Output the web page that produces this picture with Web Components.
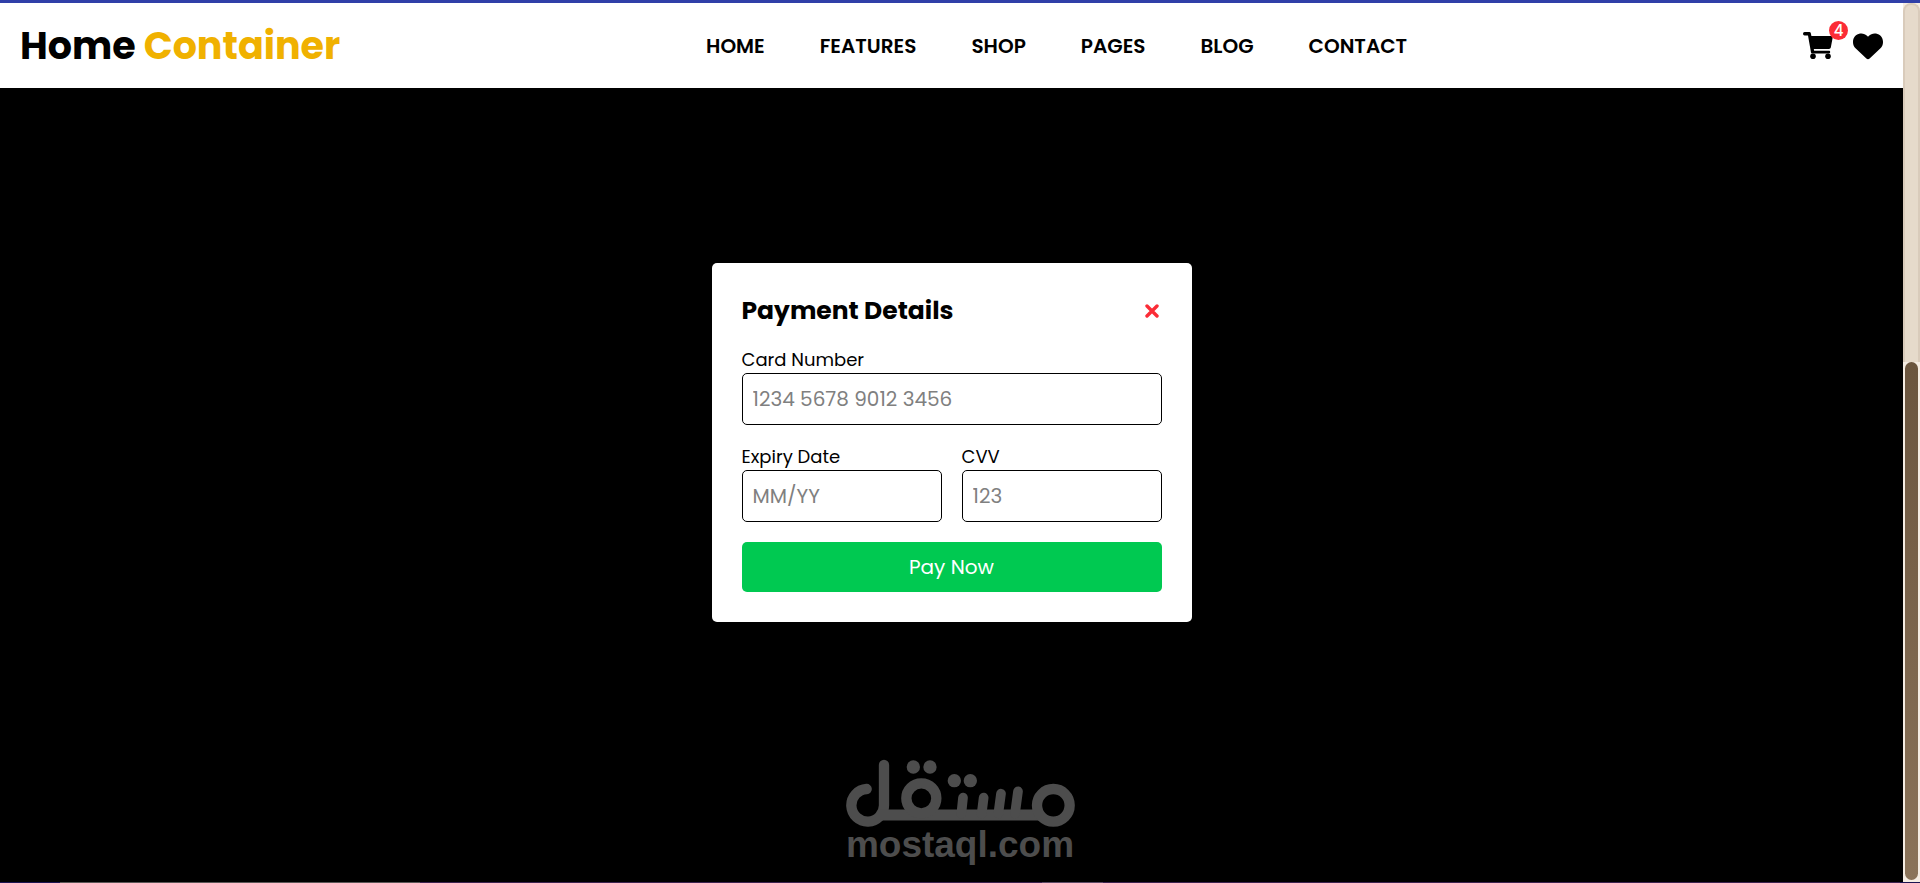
<!DOCTYPE html>
<html lang="en">
<head>
<meta charset="utf-8">
<title>Home Container</title>
<style>
  body { margin: 0; font-family: Poppins, Inter, "Open Sans", sans-serif; color: #000; background: #000; }
</style>
</head>
<body>
<app-page>
  <site-header slot="header">
    <nav-link href="#home">HOME</nav-link>
    <nav-link href="#features">FEATURES</nav-link>
    <nav-link href="#shop">SHOP</nav-link>
    <nav-link href="#pages">PAGES</nav-link>
    <nav-link href="#blog">BLOG</nav-link>
    <nav-link href="#contact">CONTACT</nav-link>
  </site-header>
  <payment-dialog heading="Payment Details">
    <form-field label="Card Number" placeholder="1234 5678 9012 3456"></form-field>
    <form-field label="Expiry Date" placeholder="MM/YY" half></form-field>
    <form-field label="CVV" placeholder="123" half></form-field>
  </payment-dialog>
  <scroll-rail slot="rail"></scroll-rail>
  <brand-watermark slot="overlay"></brand-watermark>
</app-page>
<script>
const define = (name, markup, setup) => {
  const template = document.createElement('template');
  template.innerHTML = '<style>*{box-sizing:border-box}</style>' + markup;
  customElements.define(name, class extends HTMLElement {
    constructor() {
      super();
      this.attachShadow({ mode: 'open' }).append(template.content.cloneNode(true));
    }
    connectedCallback() { if (setup) setup(this, this.shadowRoot); }
  });
};

define('app-page', `
  <style>
    :host { display: grid; grid-template: 3px 1fr 1px / 1fr 17px; min-height: 100vh; position: relative; }
    .top { grid-column: 1 / -1; background: #303fa8; }
    .view { display: flex; flex-direction: column; min-width: 0; }
    main { flex: 1; padding: 175px 20px 0; background: #000; }
    .edge { grid-column: 1 / -1;
      background: linear-gradient(90deg, #1c1452 60px, #5a5656 60px 420px, #3c2350 420px 1042px, #5c4a66 1042px 1103px, #3c2350 1103px 1900px, #1c1452 1900px); }
  </style>
  <div class="top"></div>
  <div class="view"><slot name="header"></slot><main><slot></slot></main></div>
  <slot name="rail"></slot>
  <div class="edge"></div>
  <slot name="overlay"></slot>`);

define('nav-link', `
  <style>
    :host { display: block; }
    a { display: block; color: #000; text-decoration: none; font-size: 20px; line-height: 28px; font-weight: 600; }
  </style>
  <a><slot></slot></a>`,
  (host, root) => { root.querySelector('a').href = host.getAttribute('href'); });

define('site-header', `
  <style>
    :host { display: block; }
    header { display: flex; align-items: center; justify-content: space-between; height: 85px; padding: 0 20px; background: #fff; }
    .brand { color: #000; text-decoration: none; font-size: 38px; line-height: 56px; font-weight: 700; }
    .brand span { color: #f0b100; }
    nav { display: flex; gap: 55px; }
    .tools { display: flex; gap: 20px; padding-left: 30px; }
    button { position: relative; display: grid; place-items: center; width: 30px; height: 30px; padding: 0; border: 0; background: none; }
    .badge { position: absolute; top: -10px; right: -15px; width: 19px; height: 19px; border-radius: 50%; background: #fb2c36; color: #fff; font: 500 15px/20px Poppins, Inter, sans-serif; text-align: center; }
  </style>
  <header>
    <a class="brand" href="#home">Home <span>Container</span></a>
    <nav><slot></slot></nav>
    <div class="tools">
      <button type="button" aria-label="Cart">
        <svg width="30" height="27" viewBox="0 0 30 27">
          <path d="M1.6 0H6.3Q7.6 0 7.9 1.4L8.4 4H29.2Q30 4 29.8 5L27.8 15.6Q27.5 17 26 17H10.8L11.1 18.8H26.2Q27.2 18.8 27.2 20T26.2 21.6H9.4Q8.3 21.6 8 20.4L5 3.6H1.6Q0 3.6 0 1.8T1.6 0Z"/>
          <circle cx="10" cy="24.2" r="2.8"/><circle cx="25" cy="24.2" r="2.8"/>
        </svg>
        <span class="badge">4</span>
      </button>
      <button type="button" aria-label="Wishlist">
        <svg width="30" height="30" viewBox="0 0 512 512"><path d="M47.6 300.4L228.3 469.1c7.5 7 17.4 10.9 27.7 10.9s20.2-3.9 27.7-10.9L464.4 300.4c30.4-28.3 47.6-68 47.6-109.5v-5.8c0-69.9-50.5-129.5-119.4-141C347 36.5 300.6 51.4 268 84L256 96 244 84c-32.6-32.6-79-47.5-124.6-39.9C50.5 55.6 0 115.2 0 185.1v5.8c0 41.5 17.2 81.2 47.6 109.5z"/></svg>
      </button>
    </div>
  </header>`);

define('form-field', `
  <style>
    :host { display: block; grid-column: span 2; min-width: 0; }
    :host([half]) { grid-column: span 1; }
    label { display: block; margin-bottom: 2px; font-size: 18px; line-height: 23px; }
    input { display: block; width: 100%; height: 52px; padding: 0 10px; border: 1px solid #000; border-radius: 5px; background: #fff; color: #000; font: 400 20px/28px Poppins, Inter, sans-serif; }
    input::placeholder { color: #808080; opacity: 1; }
  </style>
  <label for="field"></label>
  <input id="field" type="text">`,
  (host, root) => {
    root.querySelector('label').textContent = host.getAttribute('label');
    root.querySelector('input').placeholder = host.getAttribute('placeholder');
  });

define('payment-dialog', `
  <style>
    :host { display: block; max-width: 480px; margin: 0 auto; }
    form { display: grid; grid-template-columns: 1fr 1fr; gap: 20px; padding: 30px; border-radius: 5px; background: #fff; }
    .head { grid-column: span 2; display: flex; justify-content: space-between; align-items: center; height: 35px; }
    h2 { margin: 0; font-size: 25px; line-height: 35px; font-weight: 700; }
    button { border: 0; font-family: inherit; cursor: pointer; }
    .close { display: grid; place-items: center; width: 20px; height: 20px; padding: 0; background: none; }
    .pay { grid-column: span 2; height: 50px; border-radius: 5px; background: #00c951; color: #fff; font-size: 20px; line-height: 28px; }
  </style>
  <form>
    <div class="head">
      <h2></h2>
      <button class="close" type="button" aria-label="Close">
        <svg width="14" height="14" viewBox="0 0 14 14"><path d="M2 2L12 12M12 2L2 12" stroke="#fb2c36" stroke-width="3.4" stroke-linecap="round"/></svg>
      </button>
    </div>
    <slot></slot>
    <button class="pay" type="button">Pay Now</button>
  </form>`,
  (host, root) => { root.querySelector('h2').textContent = host.getAttribute('heading'); });

define('scroll-rail', `
  <style>
    :host { display: grid; grid-template-rows: 359fr 519fr; padding: 0 2px 2px; background: #f5ece2; }
    .track { margin: 0 -2px; border: 2px solid #d9cbbb; border-bottom: 0; border-radius: 8px 8px 0 0; background: #e6dacb; }
    .thumb { border-radius: 7px; background: linear-gradient(#6b553e, #8b7359); }
  </style>
  <div class="track"></div><div class="thumb"></div>`);

define('brand-watermark', `
  <style>
    :host { position: absolute; left: 0; right: 0; bottom: 20px; display: grid; justify-items: center; pointer-events: none; color: #4d4d4d; }
    svg { display: block; }
    span { font: 700 37px/36px "Liberation Sans", Arial, sans-serif; }
  </style>
  <svg width="230" height="68" viewBox="45 40 690 204" fill="none" stroke="currentColor" stroke-width="31" stroke-linecap="round" aria-hidden="true">
    <path d="M110 130A49 49 0 1 0 162 178V58"/>
    <path d="M150 208H630" stroke-width="33" stroke-linecap="butt"/>
    <circle cx="274" cy="158" r="45"/>
    <circle cx="670" cy="179" r="49"/>
    <path d="M399 156L394 204M461 156L455 204M513 144L505 204M564 137L555 204" stroke-width="29"/>
    <g fill="currentColor" stroke="none"><circle cx="250" cy="64" r="20"/><circle cx="300" cy="64" r="20"/><circle cx="373" cy="105" r="20"/><circle cx="421" cy="105" r="20"/></g>
  </svg>
  <span>mostaql.com</span>`);
</script>
</body>
</html>
